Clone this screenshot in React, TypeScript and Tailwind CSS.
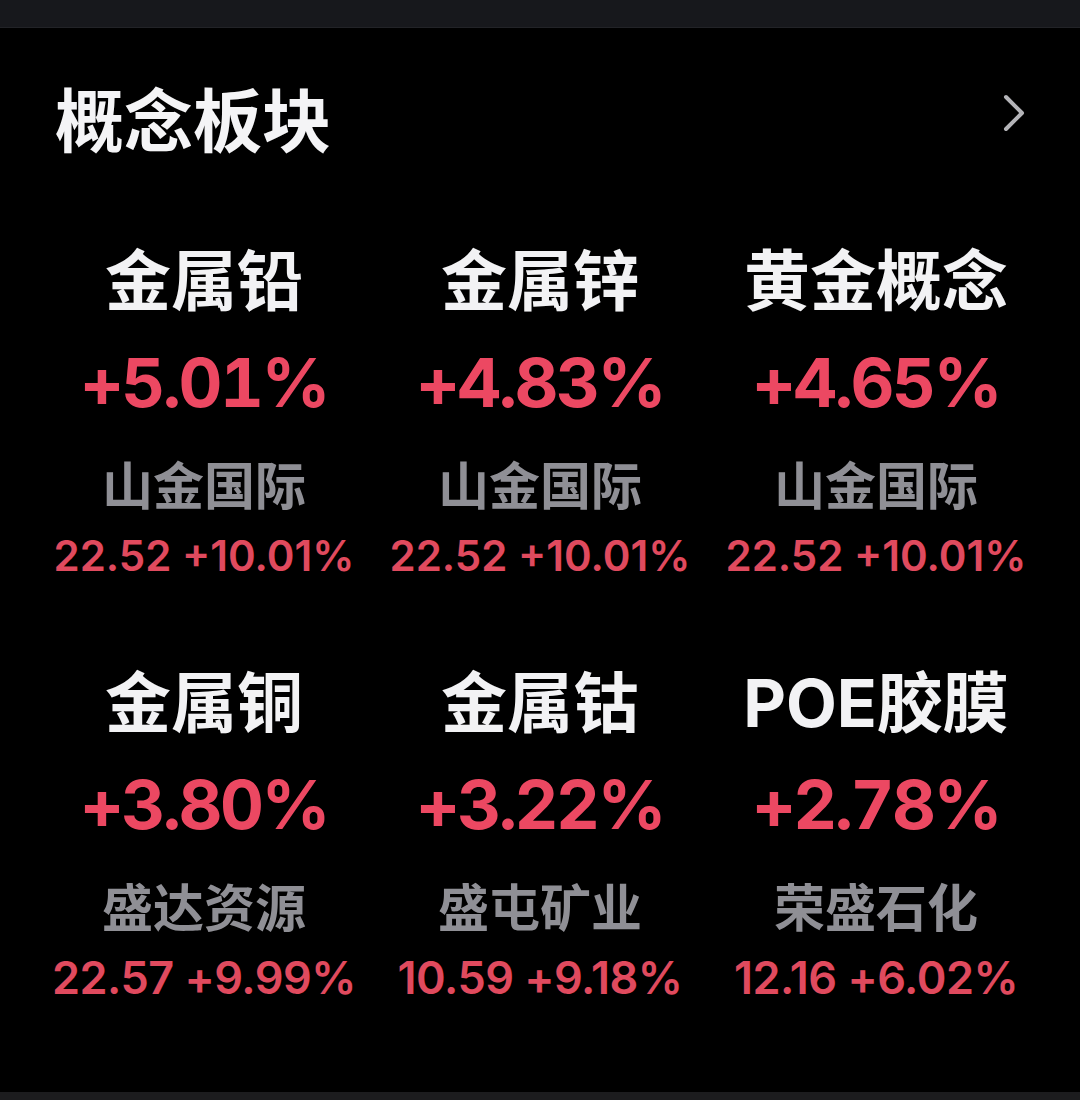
import React from 'react';

type Sector = {
  name: string;
  change: string;
  leader: string;
  price: string;
  leaderChange: string;
};

const SECTORS: Sector[] = [
  { name: '金属铅', change: '+5.01%', leader: '山金国际', price: '22.52', leaderChange: '+10.01%' },
  { name: '金属锌', change: '+4.83%', leader: '山金国际', price: '22.52', leaderChange: '+10.01%' },
  { name: '黄金概念', change: '+4.65%', leader: '山金国际', price: '22.52', leaderChange: '+10.01%' },
  { name: '金属铜', change: '+3.80%', leader: '盛达资源', price: '22.57', leaderChange: '+9.99%' },
  { name: '金属钴', change: '+3.22%', leader: '盛屯矿业', price: '10.59', leaderChange: '+9.18%' },
  { name: 'POE胶膜', change: '+2.78%', leader: '荣盛石化', price: '12.16', leaderChange: '+6.02%' },
];

const CJK = "font-['Noto_Sans_CJK_SC',sans-serif]";
const NUM = "font-['Inter','Noto_Sans_CJK_SC',sans-serif]";

function SectorCell({ s }: { s: Sector }) {
  // longer quote lines get a smaller size so they fit the column
  const long = (s.price + s.leaderChange).length > 11;
  return (
    <div className="flex flex-col items-center text-center whitespace-nowrap">
      <div className={`${NUM} text-[66px] leading-[102px] font-bold text-[#f2f2f4]`}>{s.name}</div>
      <div className={`${NUM} text-[68px] leading-[100px] font-bold text-[#ec4862] tabular-nums tracking-[-2.5px]`}>
        {s.change}
      </div>
      <div className={`${CJK} text-[51px] leading-[102px] font-semibold text-[#8f8f95]`}>{s.leader}</div>
      <div
        className={`${NUM} leading-[44px] font-semibold text-[#e04a5e] ${long ? 'text-[42px]' : 'text-[45px] tracking-[-0.5px]'}`}
      >
        {s.price} {s.leaderChange}
      </div>
    </div>
  );
}

export default function App() {
  return (
    <div className="h-[1100px] w-[1080px] bg-black flex flex-col overflow-hidden">
      <div className="h-[28px] bg-[#17181c] border-b border-[#222327]" />

      {/* header */}
      <div className="flex items-center justify-between pl-[55px] pr-[52px] pt-[49px]">
        <h1 className={`${CJK} text-[69px] leading-[80px] font-bold text-[#f4f4f6]`}>概念板块</h1>
        <svg width="28" height="40" viewBox="0 0 28 40" fill="none" className="mb-[10px]">
          <polyline points="6,5 22,21 6,37" stroke="#b4b4b8" strokeWidth="4" strokeLinecap="round" strokeLinejoin="round" />
        </svg>
      </div>

      {/* sector grid */}
      <div className="grid grid-cols-3 gap-y-[74px] px-[36px] mt-[73px]">
        {SECTORS.map((s) => (
          <SectorCell key={s.name} s={s} />
        ))}
      </div>

      <div className="mt-auto h-[8px] bg-[#1c1c1e]" />
    </div>
  );
}
